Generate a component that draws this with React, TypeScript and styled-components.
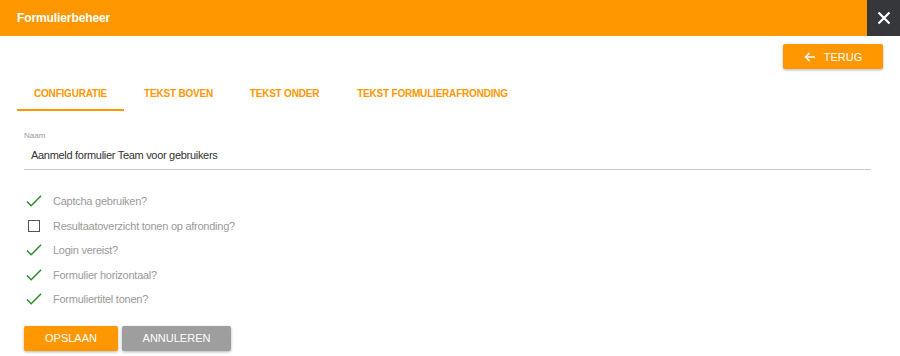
import React, { FC } from "react";
import styled, { createGlobalStyle } from "styled-components";

const GlobalStyle = createGlobalStyle`
  html, body {
    margin: 0;
    padding: 0;
    background: #fff;
    font-family: "Liberation Sans", Arial, sans-serif;
  }
`;

const ORANGE = "#ff9800";

const Page = styled.div`
  width: 900px;
  height: 356px;
  overflow: hidden;
  display: flex;
  flex-direction: column;
`;

const TopBar = styled.div`
  height: 36px;
  background: ${ORANGE};
  display: flex;
  align-items: center;
  justify-content: space-between;
`;

const Title = styled.div`
  color: #fff;
  font-size: 12px;
  font-weight: bold;
  letter-spacing: -0.1px;
  padding-left: 17px;
`;

const CloseButton = styled.div`
  width: 33px;
  height: 36px;
  background: #36373b;
  display: flex;
  align-items: center;
  justify-content: center;
`;

const Body = styled.div`
  padding: 0 17px 0 16px;
  display: flex;
  flex-direction: column;
`;

const ActionRow = styled.div`
  display: flex;
  justify-content: flex-end;
  padding-top: 8px;
`;

const Button = styled.button<{ $variant?: "primary" | "muted"; $width: number }>`
  width: ${(p) => p.$width}px;
  height: 25px;
  border: none;
  border-radius: 2px;
  background: ${(p) => (p.$variant === "muted" ? "#9e9e9e" : ORANGE)};
  color: #fff;
  font-family: "Liberation Sans", Arial, sans-serif;
  font-size: 11px;
  text-transform: uppercase;
  display: flex;
  align-items: center;
  justify-content: center;
  gap: 8px;
  box-shadow: 0 1px 3px rgba(0, 0, 0, 0.3);
  padding: 0;
`;

const Tabs = styled.div`
  display: flex;
  margin: 10px 0 0 1px;
  height: 32px;
`;

const Tab = styled.div<{ $active?: boolean; $width: number }>`
  width: ${(p) => p.$width}px;
  display: flex;
  align-items: center;
  justify-content: center;
  color: ${ORANGE};
  font-size: 10px;
  font-weight: bold;
  letter-spacing: -0.2px;
  border-bottom: 2px solid ${(p) => (p.$active ? ORANGE : "transparent")};
  box-sizing: border-box;
  padding-bottom: 2px;
`;

const Field = styled.div`
  margin: 20px 12px 0 8px;
  border-bottom: 1px solid #c8c8c8;
  padding-bottom: 8px;
`;

const FieldLabel = styled.div`
  font-size: 8px;
  color: #9a9a9a;
  height: 10px;
`;

const FieldValue = styled.div`
  font-size: 11px;
  color: #333;
  margin-top: 8px;
  padding-left: 7px;
  letter-spacing: -0.3px;
`;

const Options = styled.div`
  display: flex;
  flex-direction: column;
  margin-top: 19px;
  padding-left: 10px;
`;

const OptionRow = styled.div`
  display: flex;
  align-items: center;
  height: 24.5px;
  gap: 11px;
`;

const IconBox = styled.div`
  width: 16px;
  display: flex;
  align-items: center;
  justify-content: center;
`;

const Box = styled.div`
  width: 10px;
  height: 10px;
  border: 1.5px solid #555;
`;

const OptionLabel = styled.div`
  font-size: 11px;
  color: #9a9a9a;
  letter-spacing: -0.25px;
`;

const Footer = styled.div`
  display: flex;
  gap: 4px;
  margin-top: 14px;
  padding-left: 8px;
`;

const Check: FC = () => (
  <svg width="17" height="14" viewBox="0 0 17 14" fill="none">
    <path d="M1 7.5L5.5 12L16 1.5" stroke="#2e8b2e" strokeWidth="1.6" />
  </svg>
);

const options = [
  { label: "Captcha gebruiken?", checked: true },
  { label: "Resultaatoverzicht tonen op afronding?", checked: false },
  { label: "Login vereist?", checked: true },
  { label: "Formulier horizontaal?", checked: true },
  { label: "Formuliertitel tonen?", checked: true },
];

const tabs = [
  { label: "CONFIGURATIE", width: 107, active: true },
  { label: "TEKST BOVEN", width: 109 },
  { label: "TEKST ONDER", width: 103 },
  { label: "TEKST FORMULIERAFRONDING", width: 193 },
];

const App: FC = () => {
  return (
    <Page>
      <GlobalStyle />
      <TopBar>
        <Title>Formulierbeheer</Title>
        <CloseButton>
          <svg width="14" height="14" viewBox="0 0 14 14">
            <path d="M1.5 1.5L12.5 12.5M12.5 1.5L1.5 12.5" stroke="#fff" strokeWidth="2.2" />
          </svg>
        </CloseButton>
      </TopBar>
      <Body>
        <ActionRow>
          <Button $width={100}>
            <svg width="12" height="10" viewBox="0 0 12 10">
              <path d="M11 5H2M5.5 1L1.5 5L5.5 9" stroke="#fff" strokeWidth="1.5" fill="none" />
            </svg>
            Terug
          </Button>
        </ActionRow>
        <Tabs>
          {tabs.map((t) => (
            <Tab key={t.label} $width={t.width} $active={t.active}>
              {t.label}
            </Tab>
          ))}
        </Tabs>
        <Field>
          <FieldLabel>Naam</FieldLabel>
          <FieldValue>Aanmeld formulier Team voor gebruikers</FieldValue>
        </Field>
        <Options>
          {options.map((o) => (
            <OptionRow key={o.label}>
              <IconBox>{o.checked ? <Check /> : <Box />}</IconBox>
              <OptionLabel>{o.label}</OptionLabel>
            </OptionRow>
          ))}
        </Options>
        <Footer>
          <Button $width={94}>Opslaan</Button>
          <Button $width={109} $variant="muted">
            Annuleren
          </Button>
        </Footer>
      </Body>
    </Page>
  );
};

export default App;
